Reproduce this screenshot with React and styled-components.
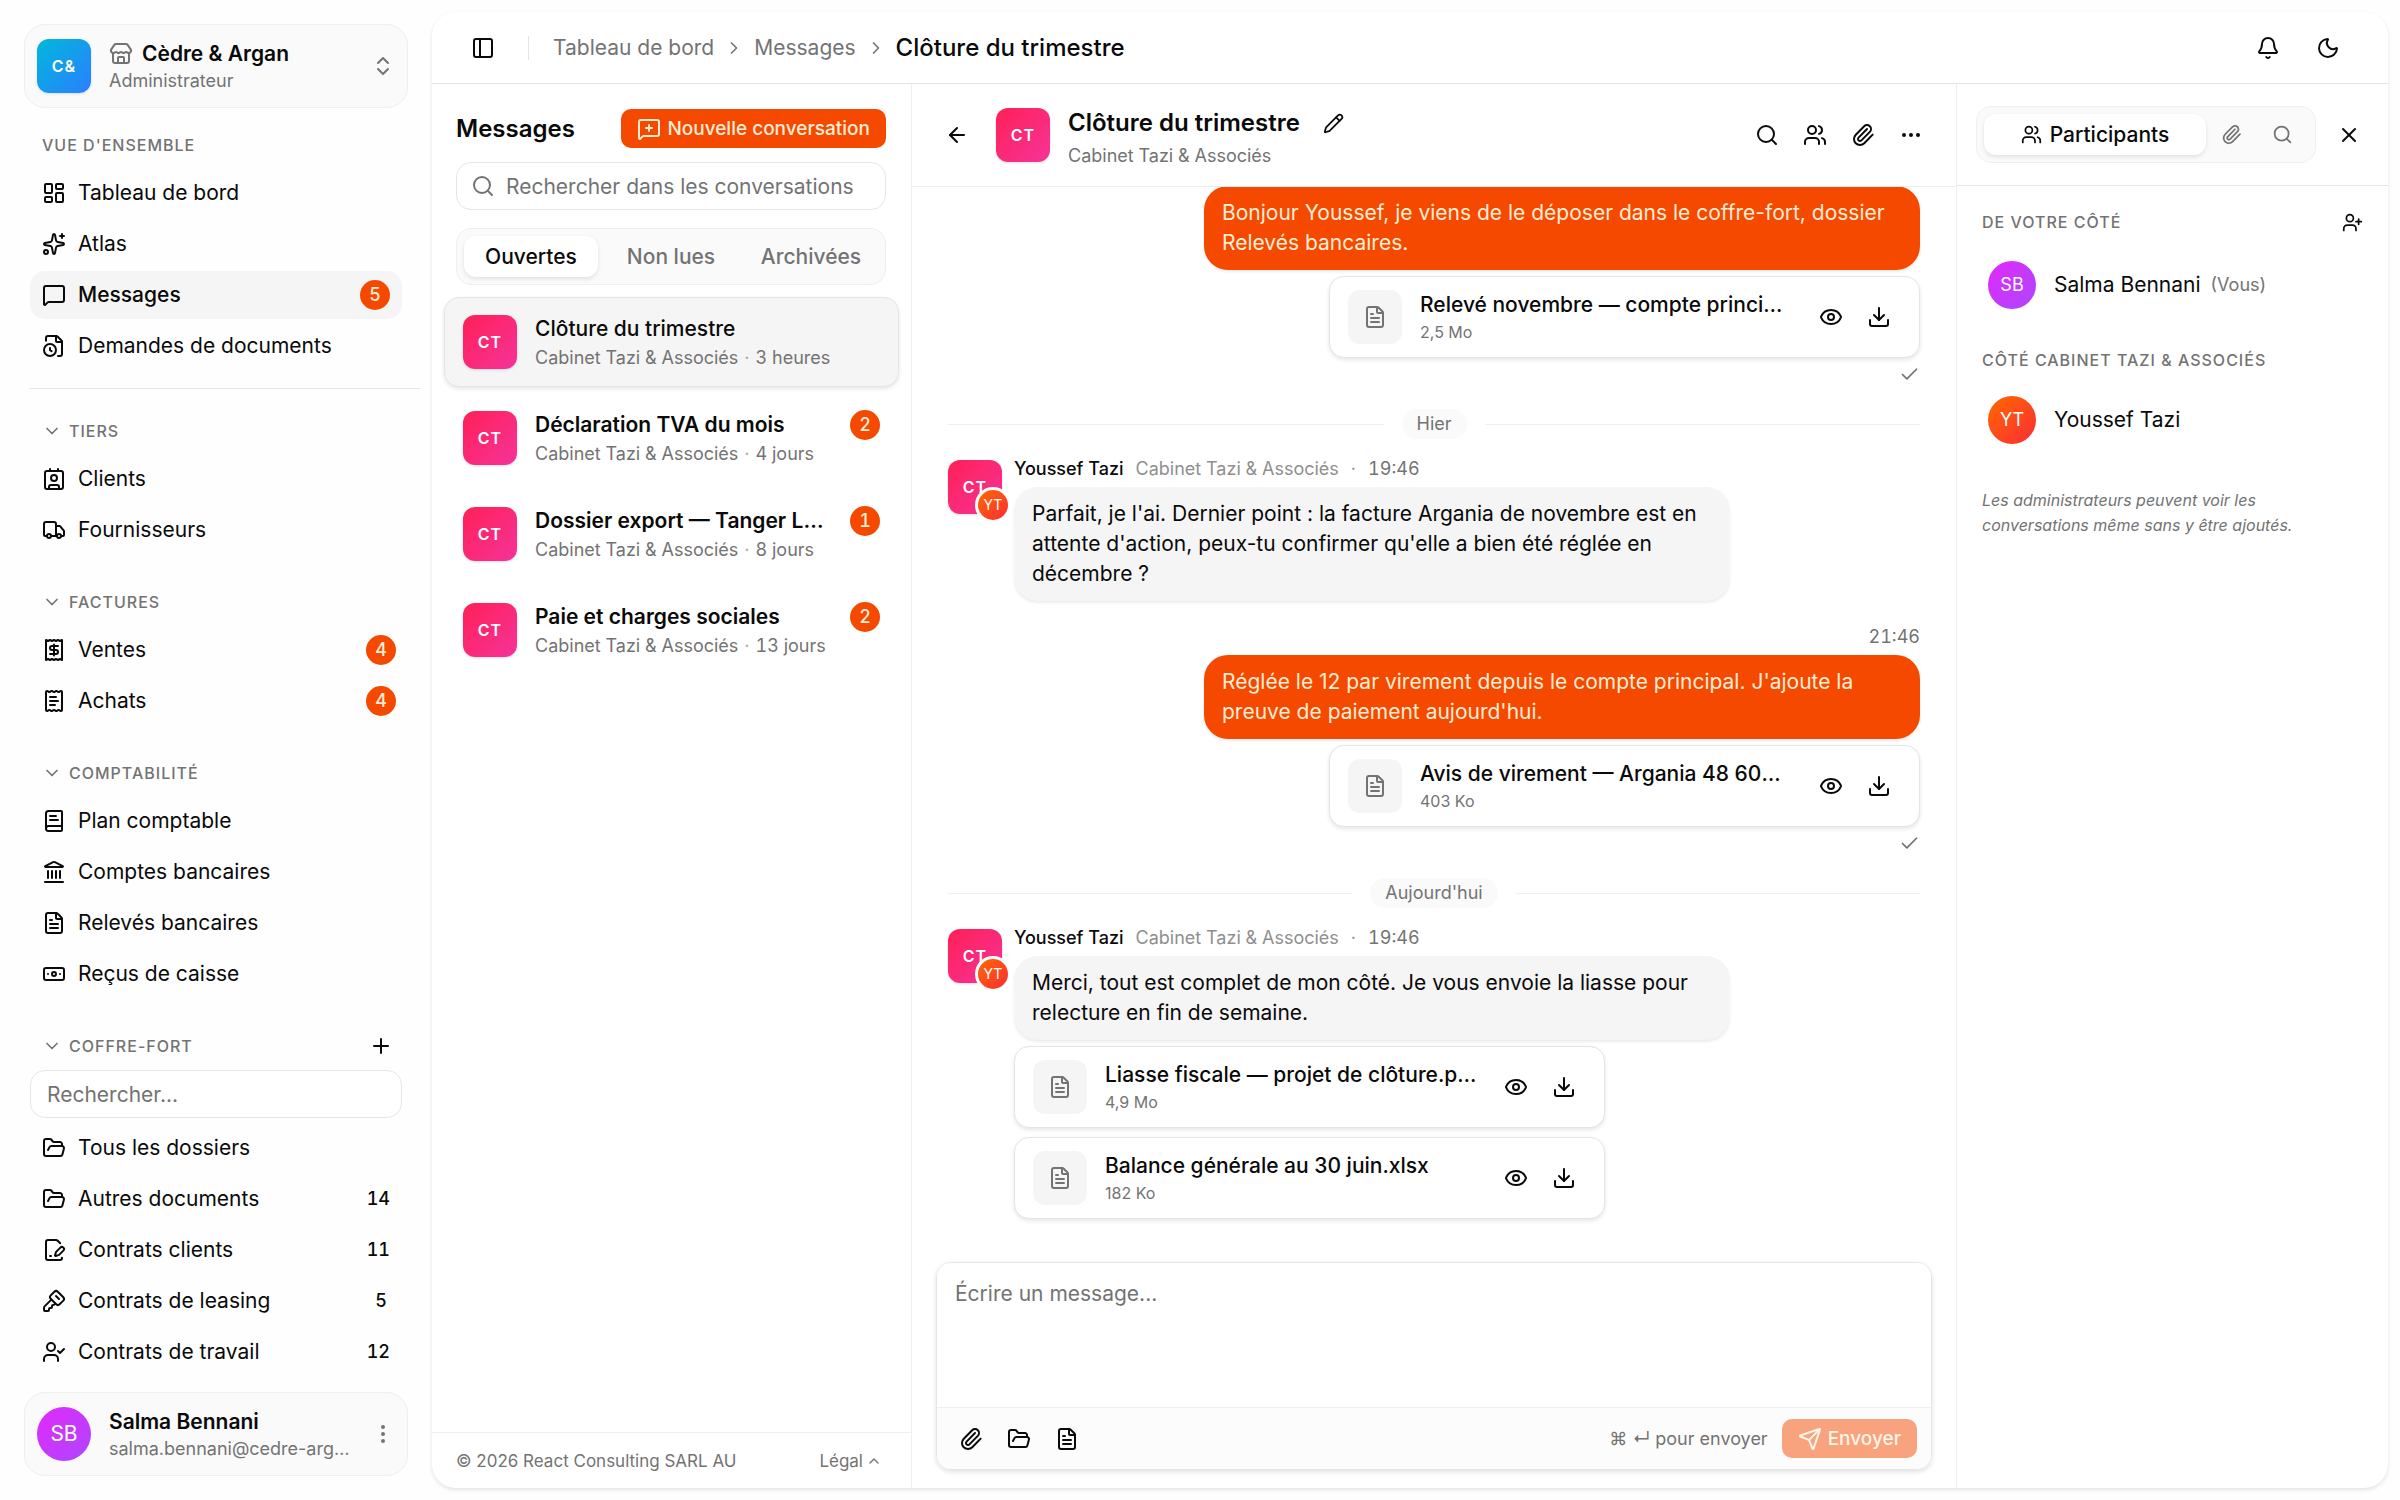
import { useState } from "react";
import styled, { createGlobalStyle, css } from "styled-components";
import {
  ArrowLeft,
  Banknote,
  Bell,
  BookText,
  Check,
  ChevronDown,
  ChevronRight,
  ChevronUp,
  ChevronsUpDown,
  Contact,
  Download,
  Ellipsis,
  EllipsisVertical,
  Eye,
  FileClock,
  FilePenLine,
  FileText,
  FolderOpen,
  KeySquare,
  Landmark,
  LayoutDashboard,
  MessageSquare,
  MessageSquarePlus,
  Moon,
  PanelLeft,
  Paperclip,
  Pencil,
  Plus,
  Receipt,
  ReceiptText,
  Search,
  Send,
  Sparkles,
  Store,
  Truck,
  UserCheck,
  UserPlus,
  Users,
  X,
} from "lucide-react";

const c = {
  text: "#0a0a0a",
  muted: "#737373",
  line: "#e5e5e5",
  softLine: "#efefef",
  soft: "#f5f5f5",
  faint: "#fafafa",
  orange: "#f54900",
  onOrange: "#ffedd5",
};

const gradients = {
  blue: "linear-gradient(135deg, #00b8db, #2b7fff)",
  pink: "linear-gradient(135deg, #ff2056, #f6339a)",
  purple: "linear-gradient(135deg, #e12afb, #ad46ff)",
  orange: "linear-gradient(135deg, #ff6900, #fb2c36)",
};

const GlobalStyle = createGlobalStyle`
  * { box-sizing: border-box; }
  body {
    margin: 0;
    background: #fefefe;
    color: ${c.text};
    font-family: Inter, "Liberation Sans", sans-serif;
    font-size: 21px;
    line-height: 30px;
  }
  button, input, textarea { font: inherit; color: inherit; }
  h1, h2, h3, p { margin: 0; }
`;

const truncate = css`
  overflow: hidden;
  white-space: nowrap;
  text-overflow: ellipsis;
`;

const Page = styled.div`
  display: flex;
  height: 100vh;
  min-height: 900px;
`;

/* ---------- shared ---------- */

const Avatar = styled.span`
  flex: none;
  display: inline-flex;
  align-items: center;
  justify-content: center;
  width: ${({ $size }) => $size || 54}px;
  height: ${({ $size }) => $size || 54}px;
  border-radius: ${({ $round }) => ($round ? "50%" : "12px")};
  background: ${({ $tone }) => gradients[$tone]};
  color: #fff;
  font-size: ${({ $font }) => $font || 16}px;
  font-weight: ${({ $round }) => ($round ? 400 : 600)};
  letter-spacing: ${({ $round }) => ($round ? "0" : "1px")};
  box-shadow: ${({ $round }) => ($round ? "none" : "0 1px 3px rgba(0, 0, 0, 0.12)")};
`;

const IconButton = styled.button`
  flex: none;
  display: inline-flex;
  align-items: center;
  justify-content: center;
  width: ${({ $size }) => $size || 48}px;
  height: ${({ $size }) => $size || 48}px;
  padding: 0;
  border: 0;
  border-radius: 12px;
  background: transparent;
  cursor: pointer;

  &:hover { background: ${c.soft}; }
`;

const Badge = styled.span`
  flex: none;
  min-width: 30px;
  height: 30px;
  padding: 0 6px;
  border-radius: 15px;
  font-size: 18px;
  font-weight: 500;
  font-variant-numeric: tabular-nums;
  text-align: center;
  background: ${({ $plain }) => ($plain ? "transparent" : c.orange)};
  color: ${({ $plain }) => ($plain ? c.text : c.onOrange)};
`;

const SolidButton = styled.button`
  display: inline-flex;
  align-items: center;
  gap: 6px;
  height: 39px;
  padding: 0 16px;
  border: 0;
  border-radius: 10px;
  background: ${c.orange};
  color: ${c.onOrange};
  font-size: 19px;
  font-weight: 500;
  white-space: nowrap;
  cursor: pointer;

  &:disabled { opacity: 0.5; cursor: default; }
`;

const Field = styled.input`
  width: 100%;
  height: 48px;
  padding: 0 16px 0 ${({ $icon }) => ($icon ? 49 : 16)}px;
  border: 1px solid ${c.line};
  border-radius: 15px;
  background: #fff;
  outline: none;

  &::placeholder { color: ${c.muted}; opacity: 1; }
  &:focus { border-color: ${c.orange}; }
`;

const TabBar = styled.div`
  display: flex;
  flex: ${({ $grow }) => ($grow ? 1 : "none")};
  gap: ${({ $grow }) => ($grow ? 0 : 6)}px;
  height: 57px;
  padding: 7px;
  border: 1px solid ${c.softLine};
  border-radius: 15px;
  background: ${c.faint};
`;

const Tab = styled.button`
  flex: ${({ $tight }) => ($tight ? "none" : "1 1 0")};
  display: inline-flex;
  align-items: center;
  justify-content: center;
  gap: 8px;
  padding: 0 15px;
  border: 0;
  border-radius: 12px;
  background: ${({ $on }) => ($on ? "#fff" : "transparent")};
  color: ${({ $on }) => ($on ? c.text : c.muted)};
  box-shadow: ${({ $on }) => ($on ? "0 2px 4px rgba(0, 0, 0, 0.1)" : "none")};
  font-weight: 500;
  cursor: pointer;
`;

/* ---------- sidebar ---------- */

const Sidebar = styled.aside`
  flex: none;
  display: flex;
  flex-direction: column;
  width: 432px;
  padding: 24px;
`;

const AccountCard = styled.button`
  flex: none;
  display: flex;
  align-items: center;
  gap: 18px;
  height: 84px;
  padding: 0 12px;
  border: 1px solid ${c.softLine};
  border-radius: 21px;
  background: ${c.faint};
  text-align: left;
  cursor: pointer;

  > svg { flex: none; color: ${c.muted}; }
`;

const AccountText = styled.span`
  flex: 1;
  min-width: 0;
  padding-top: 2px;
`;

const AccountName = styled.span`
  display: flex;
  align-items: center;
  gap: 9px;
  line-height: 27px;
  font-weight: 600;

  svg { color: ${c.muted}; }
`;

const AccountSub = styled.span`
  display: block;
  ${truncate}
  line-height: 27px;
  font-size: 18px;
  color: ${c.muted};
`;

const Nav = styled.nav`
  flex: 1;
  min-height: 0;
  padding: 13px 6px 0;
`;

const Group = styled.section`
  margin-bottom: 24px;
`;

const GroupHead = styled.div`
  display: flex;
  align-items: center;
  gap: 8px;
  height: 48px;
  padding: 0 0 0 12px;
  color: ${c.muted};
`;

const GroupTitle = styled.h3`
  flex: 1;
  font-size: 16px;
  font-weight: 500;
  letter-spacing: 1px;
  text-transform: uppercase;
`;

const GroupToggle = styled.button`
  flex: 1;
  display: flex;
  align-items: center;
  gap: 7px;
  padding: 0;
  border: 0;
  background: none;
  text-align: left;
  cursor: pointer;
`;

const AddButton = styled(IconButton)`
  margin-right: 6px;
  color: ${c.text};
`;

const Items = styled.div`
  display: grid;
  gap: 3px;
`;

const NavLink = styled.a`
  display: flex;
  align-items: center;
  gap: 12px;
  height: 48px;
  padding: 0 ${({ $on }) => ($on ? 12 : 6)}px 0 12px;
  border-radius: 15px;
  background: ${({ $on }) => ($on ? c.soft : "transparent")};
  font-weight: ${({ $on }) => ($on ? 500 : 400)};
  color: inherit;
  text-decoration: none;

  &:hover { background: ${c.soft}; }
`;

const NavLabel = styled.span`
  flex: 1;
  ${truncate}
`;

const Rule = styled.hr`
  height: 1px;
  margin: 18px -18px 18px 0;
  border: 0;
  background: ${c.line};
`;

const VaultSearch = styled.div`
  margin-bottom: 6px;
`;

/* ---------- main panel ---------- */

const Panel = styled.main`
  flex: 1;
  min-width: 0;
  display: flex;
  flex-direction: column;
  margin: 12px 12px 12px 0;
  border-radius: 24px;
  background: #fff;
  box-shadow: 0 2px 4px rgba(0, 0, 0, 0.11);
  overflow: hidden;
`;

const TopBar = styled.header`
  flex: none;
  display: flex;
  align-items: center;
  height: 72px;
  padding: 0 36px 0 27px;
  border-bottom: 1px solid ${c.line};
`;

const TopDivider = styled.span`
  width: 1px;
  height: 24px;
  margin: 0 24px 0 21px;
  background: ${c.line};
`;

const Crumbs = styled.nav`
  flex: 1;
  display: flex;
  align-items: center;
  gap: 10px;
  color: ${c.muted};

  a { color: inherit; text-decoration: none; }
`;

const CurrentCrumb = styled.h1`
  font-size: 24px;
  font-weight: 500;
  color: ${c.text};
`;

const TopActions = styled.div`
  display: flex;
  gap: 12px;
`;

const Columns = styled.div`
  flex: 1;
  min-height: 0;
  display: flex;
`;

const Inbox = styled.section`
  flex: none;
  display: flex;
  flex-direction: column;
  width: 480px;
  border-right: 1px solid ${c.softLine};
`;

const InboxHead = styled.div`
  display: grid;
  gap: 18px;
  padding: 25px 25px 12px 24px;
`;

const InboxTitle = styled.div`
  display: flex;
  align-items: center;
  justify-content: space-between;
  margin-bottom: -4px;

  h2 { font-size: 24px; font-weight: 600; }
`;

const SearchBox = styled.label`
  position: relative;
  display: block;

  svg {
    position: absolute;
    top: 12px;
    left: 15px;
    color: ${c.muted};
  }
`;

const Threads = styled.div`
  flex: 1;
  display: flex;
  flex-direction: column;
  gap: 6px;
  padding: 0 12px;
`;

const Thread = styled.button`
  display: flex;
  align-items: center;
  gap: 18px;
  height: 90px;
  padding: 0 18px;
  border: 1px solid ${({ $on }) => ($on ? c.line : "transparent")};
  border-radius: 15px;
  background: ${({ $on }) => ($on ? c.soft : "transparent")};
  box-shadow: ${({ $on }) => ($on ? "0 2px 4px rgba(0, 0, 0, 0.1)" : "none")};
  text-align: left;
  cursor: pointer;
`;

const ThreadBody = styled.span`
  flex: 1;
  min-width: 0;
`;

const ThreadTop = styled.span`
  display: flex;
  align-items: center;
  gap: 18px;
`;

const ThreadName = styled.span`
  flex: 1;
  ${truncate}
  font-weight: ${({ $unread }) => ($unread ? 600 : 500)};
`;

const Small = styled.span`
  display: block;
  ${truncate}
  font-size: 18px;
  line-height: 27px;
  font-variant-numeric: tabular-nums;
  color: ${c.muted};
`;

const Dot = styled.span`
  margin: 0 6px;
  color: #a3a3a3;
`;

const InboxFoot = styled.footer`
  display: flex;
  justify-content: space-between;
  align-items: center;
  height: 56px;
  padding: 0 29px 0 24px;
  border-top: 1px solid ${c.softLine};
  font-size: 17px;
  color: ${c.muted};
`;

const LegalButton = styled.button`
  display: inline-flex;
  align-items: center;
  gap: 3px;
  padding: 0;
  border: 0;
  background: none;
  cursor: pointer;
`;

/* ---------- conversation ---------- */

const Chat = styled.section`
  flex: 1;
  min-width: 0;
  display: flex;
  flex-direction: column;
`;

const ChatHead = styled.header`
  flex: none;
  display: flex;
  align-items: center;
  gap: 18px;
  height: 103px;
  padding: 0 21px 0 24px;
  border-bottom: 1px solid ${c.softLine};
`;

const ChatTitle = styled.div`
  flex: 1;
  min-width: 0;
`;

const ChatName = styled.div`
  display: flex;
  align-items: center;
  gap: 13px;

  h2 { font-size: 24px; font-weight: 600; }
`;

const ChatSub = styled(Small)`
  line-height: 24px;
`;

const Stream = styled.div`
  flex: 1;
  min-height: 0;
  display: flex;
  flex-direction: column;
  justify-content: flex-end;
  padding: 0 36px 25px;
  overflow: hidden;
`;

const DayRule = styled.div`
  display: flex;
  align-items: center;
  gap: 18px;
  margin: 24px 0 18px;

  &::before,
  &::after {
    content: "";
    flex: 1;
    height: 1px;
    background: ${c.softLine};
  }

  span {
    padding: 0 15px;
    border-radius: 15px;
    background: ${c.faint};
    font-size: 18px;
    color: ${c.muted};
  }
`;

const Sent = styled.article`
  display: flex;
  flex-direction: column;
  align-items: flex-end;
  gap: 6px;
`;

const Received = styled.article`
  display: flex;
  align-items: flex-start;
  gap: 12px;
`;

const ReceivedBody = styled.div`
  flex: 1;
  min-width: 0;
  display: flex;
  flex-direction: column;
  align-items: flex-start;
  gap: 6px;
`;

const Bubble = styled.p`
  max-width: 716px;
  padding: 12px 18px;
  border-radius: 24px;
  background: ${({ $own }) => ($own ? c.orange : c.soft)};
  color: ${({ $own }) => ($own ? c.onOrange : c.text)};
  box-shadow: 0 2px 3px rgba(0, 0, 0, 0.08);
`;

const AvatarStack = styled.div`
  position: relative;
  margin-top: 3px;
`;

const MiniAvatar = styled(Avatar)`
  position: absolute;
  right: -9px;
  bottom: -9px;
  border: 3px solid #fff;
`;

const Meta = styled.div`
  display: flex;
  gap: 12px;
  height: 24px;
  line-height: 24px;
  font-size: 18px;
  font-variant-numeric: tabular-nums;
  color: ${c.muted};

  b { font-weight: 500; color: ${c.text}; }
  i { font-style: normal; color: #8f8f8f; }
`;

const SentTime = styled.time`
  height: 24px;
  margin-top: 24px;
  line-height: 24px;
  font-size: 18px;
  font-variant-numeric: tabular-nums;
  color: ${c.muted};
`;

const Receipts = styled.div`
  display: flex;
  align-items: center;
  height: 21px;
  color: ${c.muted};
`;

const Files = styled.div`
  display: grid;
  gap: 9px;
`;

const FileCard = styled.div`
  display: flex;
  align-items: center;
  width: 591px;
  height: 82px;
  padding: 0 16px 0 18px;
  border: 1px solid ${c.line};
  border-radius: 15px;
  background: #fff;
  box-shadow: 0 2px 4px rgba(0, 0, 0, 0.1);
`;

const FileIcon = styled.span`
  flex: none;
  display: flex;
  align-items: center;
  justify-content: center;
  width: 54px;
  height: 54px;
  margin-right: 18px;
  border-radius: 12px;
  background: ${c.soft};
  color: ${c.muted};
`;

const FileInfo = styled.div`
  flex: 1;
  min-width: 0;
  margin-right: 14px;
`;

const FileName = styled.div`
  ${truncate}
  font-weight: 500;
`;

const FileSize = styled.div`
  font-size: 16px;
  line-height: 24px;
  color: ${c.muted};
`;

const Composer = styled.form`
  flex: none;
  display: flex;
  flex-direction: column;
  margin: 18px 24px;
  border: 1px solid ${c.line};
  border-radius: 15px;
  box-shadow: 0 2px 5px rgba(0, 0, 0, 0.12);
  overflow: hidden;
`;

const MessageInput = styled.textarea`
  display: block;
  height: 144px;
  padding: 16px 18px;
  border: 0;
  outline: none;
  resize: none;
  background: #fff;

  &::placeholder { color: ${c.muted}; opacity: 1; }
`;

const ComposerBar = styled.div`
  display: flex;
  align-items: center;
  height: 62px;
  padding: 0 14px 0 10px;
  border-top: 1px solid ${c.softLine};
  background: #fcfcfc;
`;

const Shortcut = styled.span`
  margin-left: auto;
  margin-right: 14px;
  font-size: 18px;
  color: ${c.muted};
`;

/* ---------- participants ---------- */

const Details = styled.aside`
  flex: none;
  width: 432px;
  border-left: 1px solid ${c.softLine};
`;

const DetailsHead = styled.div`
  display: flex;
  align-items: center;
  gap: 9px;
  height: 102px;
  padding: 0 15px 0 19px;
  border-bottom: 1px solid ${c.line};
`;

const DetailsBody = styled.div`
  display: grid;
  gap: 24px;
  padding: 12px 12px 24px 25px;
`;

const PeopleHead = styled.div`
  display: flex;
  align-items: center;
  min-height: 42px;
  margin-bottom: 9px;
  color: ${c.muted};

  button { color: ${c.text}; }
`;

const Person = styled.div`
  display: flex;
  align-items: center;
  gap: 18px;
  height: 60px;
  padding: 0 6px;
`;

const PersonName = styled.span`
  display: flex;
  gap: 10px;

  small { font-size: 18px; color: ${c.muted}; }
`;

const Note = styled.p`
  padding-top: 14px;
  padding-right: 24px;
  font-size: 16px;
  line-height: 25px;
  font-style: italic;
  color: ${c.muted};
`;

const overview = [
  { label: "Tableau de bord", icon: LayoutDashboard },
  { label: "Atlas", icon: Sparkles },
  { label: "Messages", icon: MessageSquare, badge: 5, on: true },
  { label: "Demandes de documents", icon: FileClock },
];

const groups = [
  {
    title: "Tiers",
    items: [
      { label: "Clients", icon: Contact },
      { label: "Fournisseurs", icon: Truck },
    ],
  },
  {
    title: "Factures",
    items: [
      { label: "Ventes", icon: Receipt, badge: 4 },
      { label: "Achats", icon: ReceiptText, badge: 4 },
    ],
  },
  {
    title: "Comptabilité",
    items: [
      { label: "Plan comptable", icon: BookText },
      { label: "Comptes bancaires", icon: Landmark },
      { label: "Relevés bancaires", icon: FileText },
      { label: "Reçus de caisse", icon: Banknote },
    ],
  },
  {
    title: "Coffre-fort",
    vault: true,
    items: [
      { label: "Tous les dossiers", icon: FolderOpen },
      { label: "Autres documents", icon: FolderOpen, count: 14 },
      { label: "Contrats clients", icon: FilePenLine, count: 11 },
      { label: "Contrats de leasing", icon: KeySquare, count: 5 },
      { label: "Contrats de travail", icon: UserCheck, count: 12 },
    ],
  },
];

const threads = [
  { name: "Clôture du trimestre", age: "3 heures" },
  { name: "Déclaration TVA du mois", age: "4 jours", unread: 2 },
  { name: "Dossier export — Tanger Logistique", age: "8 jours", unread: 1 },
  { name: "Paie et charges sociales", age: "13 jours", unread: 2 },
];

function NavItems({ items }) {
  return (
    <Items>
      {items.map(({ label, icon: Icon, badge, count, on }) => (
        <NavLink key={label} href="#" $on={on} aria-current={on ? "page" : undefined}>
          <Icon size={24} />
          <NavLabel>{label}</NavLabel>
          {badge && <Badge>{badge}</Badge>}
          {count && <Badge $plain>{count}</Badge>}
        </NavLink>
      ))}
    </Items>
  );
}

function SideMenu() {
  return (
    <Sidebar>
      <AccountCard type="button">
        <Avatar $tone="blue">C&amp;</Avatar>
        <AccountText>
          <AccountName>
            <Store size={24} />
            Cèdre &amp; Argan
          </AccountName>
          <AccountSub>Administrateur</AccountSub>
        </AccountText>
        <ChevronsUpDown size={24} />
      </AccountCard>

      <Nav aria-label="Menu principal">
        <GroupHead>
          <GroupTitle>Vue d'ensemble</GroupTitle>
        </GroupHead>
        <NavItems items={overview} />
        <Rule />
        {groups.map((group) => (
          <Group key={group.title}>
            <GroupHead>
              <GroupToggle type="button">
                <ChevronDown size={20} />
                <GroupTitle>{group.title}</GroupTitle>
              </GroupToggle>
              {group.vault && (
                <AddButton type="button" $size={30} aria-label="Ajouter un dossier">
                  <Plus size={24} />
                </AddButton>
              )}
            </GroupHead>
            {group.vault && (
              <VaultSearch>
                <Field type="text" placeholder="Rechercher..." aria-label="Rechercher un dossier" />
              </VaultSearch>
            )}
            <NavItems items={group.items} />
          </Group>
        ))}
      </Nav>

      <AccountCard type="button">
        <Avatar $tone="purple" $round $font={21}>SB</Avatar>
        <AccountText>
          <AccountName>Salma Bennani</AccountName>
          <AccountSub>salma.bennani@cedre-argan.ma</AccountSub>
        </AccountText>
        <EllipsisVertical size={24} />
      </AccountCard>
    </Sidebar>
  );
}

function ThreadList() {
  const [tab, setTab] = useState("Ouvertes");
  const [active, setActive] = useState(0);

  return (
    <Inbox>
      <InboxHead>
        <InboxTitle>
          <h2>Messages</h2>
          <SolidButton type="button">
            <MessageSquarePlus size={24} />
            Nouvelle conversation
          </SolidButton>
        </InboxTitle>
        <SearchBox>
          <Search size={24} />
          <Field $icon type="text" placeholder="Rechercher dans les conversations" aria-label="Rechercher dans les conversations" />
        </SearchBox>
        <TabBar>
          {["Ouvertes", "Non lues", "Archivées"].map((name) => (
            <Tab key={name} type="button" $on={tab === name} onClick={() => setTab(name)}>
              {name}
            </Tab>
          ))}
        </TabBar>
      </InboxHead>

      <Threads>
        {threads.map((t, i) => (
          <Thread key={t.name} type="button" $on={i === active} onClick={() => setActive(i)}>
            <Avatar $tone="pink">CT</Avatar>
            <ThreadBody>
              <ThreadTop>
                <ThreadName $unread={t.unread}>{t.name}</ThreadName>
                {t.unread && <Badge>{t.unread}</Badge>}
              </ThreadTop>
              <Small>
                Cabinet Tazi &amp; Associés<Dot>·</Dot>{t.age}
              </Small>
            </ThreadBody>
          </Thread>
        ))}
      </Threads>

      <InboxFoot>
        <span>© 2026 React Consulting SARL AU</span>
        <LegalButton type="button">
          Légal <ChevronUp size={16} />
        </LegalButton>
      </InboxFoot>
    </Inbox>
  );
}

function Attachment({ name, size }) {
  return (
    <FileCard>
      <FileIcon>
        <FileText size={24} />
      </FileIcon>
      <FileInfo>
        <FileName>{name}</FileName>
        <FileSize>{size}</FileSize>
      </FileInfo>
      <IconButton type="button" aria-label="Aperçu">
        <Eye size={24} />
      </IconButton>
      <IconButton type="button" aria-label="Télécharger">
        <Download size={24} />
      </IconButton>
    </FileCard>
  );
}

function SentMessage({ time, text, file }) {
  return (
    <Sent>
      {time && <SentTime>{time}</SentTime>}
      <Bubble $own>{text}</Bubble>
      <Attachment {...file} />
      <Receipts>
        <Check size={21} />
      </Receipts>
    </Sent>
  );
}

function ReceivedMessage({ time, text, files = [] }) {
  return (
    <Received>
      <AvatarStack>
        <Avatar $tone="pink">CT</Avatar>
        <MiniAvatar $tone="orange" $round $size={36} $font={14}>YT</MiniAvatar>
      </AvatarStack>
      <ReceivedBody>
        <Meta>
          <b>Youssef Tazi</b>
          <i>Cabinet Tazi &amp; Associés</i>
          <i>·</i>
          <time>{time}</time>
        </Meta>
        <Bubble>{text}</Bubble>
        {files.length > 0 && (
          <Files>
            {files.map((f) => (
              <Attachment key={f.name} {...f} />
            ))}
          </Files>
        )}
      </ReceivedBody>
    </Received>
  );
}

function Conversation() {
  const [draft, setDraft] = useState("");

  return (
    <Chat>
      <ChatHead>
        <IconButton type="button" $size={42} aria-label="Retour">
          <ArrowLeft size={24} />
        </IconButton>
        <Avatar $tone="pink">CT</Avatar>
        <ChatTitle>
          <ChatName>
            <h2>Clôture du trimestre</h2>
            <IconButton type="button" $size={42} aria-label="Renommer">
              <Pencil size={21} />
            </IconButton>
          </ChatName>
          <ChatSub>Cabinet Tazi &amp; Associés</ChatSub>
        </ChatTitle>
        <div>
          <IconButton type="button" aria-label="Rechercher"><Search size={24} /></IconButton>
          <IconButton type="button" aria-label="Participants"><Users size={24} /></IconButton>
          <IconButton type="button" aria-label="Pièces jointes"><Paperclip size={24} /></IconButton>
          <IconButton type="button" aria-label="Plus d'options"><Ellipsis size={24} /></IconButton>
        </div>
      </ChatHead>

      <Stream>
        <SentMessage
          text="Bonjour Youssef, je viens de le déposer dans le coffre-fort, dossier Relevés bancaires."
          file={{ name: "Relevé novembre — compte principal.pdf", size: "2,5 Mo" }}
        />
        <DayRule><span>Hier</span></DayRule>
        <ReceivedMessage
          time="19:46"
          text="Parfait, je l'ai. Dernier point : la facture Argania de novembre est en attente d'action, peux-tu confirmer qu'elle a bien été réglée en décembre ?"
        />
        <SentMessage
          time="21:46"
          text="Réglée le 12 par virement depuis le compte principal. J'ajoute la preuve de paiement aujourd'hui."
          file={{ name: "Avis de virement — Argania 48 600 MAD.pdf", size: "403 Ko" }}
        />
        <DayRule><span>Aujourd'hui</span></DayRule>
        <ReceivedMessage
          time="19:46"
          text="Merci, tout est complet de mon côté. Je vous envoie la liasse pour relecture en fin de semaine."
          files={[
            { name: "Liasse fiscale — projet de clôture.pdf", size: "4,9 Mo" },
            { name: "Balance générale au 30 juin.xlsx", size: "182 Ko" },
          ]}
        />
      </Stream>

      <Composer onSubmit={(e) => e.preventDefault()}>
        <MessageInput
          placeholder="Écrire un message..."
          aria-label="Écrire un message"
          value={draft}
          onChange={(e) => setDraft(e.target.value)}
        />
        <ComposerBar>
          <IconButton type="button" aria-label="Joindre un fichier"><Paperclip size={24} /></IconButton>
          <IconButton type="button" aria-label="Choisir dans le coffre-fort"><FolderOpen size={24} /></IconButton>
          <IconButton type="button" aria-label="Joindre une facture"><FileText size={24} /></IconButton>
          <Shortcut>⌘ ↵ pour envoyer</Shortcut>
          <SolidButton type="submit" disabled={!draft.trim()}>
            <Send size={24} />
            Envoyer
          </SolidButton>
        </ComposerBar>
      </Composer>
    </Chat>
  );
}

function Participants() {
  return (
    <Details>
      <DetailsHead>
        <TabBar $grow>
          <Tab type="button" $on><Users size={21} />Participants</Tab>
          <Tab type="button" $tight aria-label="Pièces jointes"><Paperclip size={21} /></Tab>
          <Tab type="button" $tight aria-label="Rechercher"><Search size={21} /></Tab>
        </TabBar>
        <IconButton type="button" aria-label="Fermer"><X size={24} /></IconButton>
      </DetailsHead>
      <DetailsBody>
        <section>
          <PeopleHead>
            <GroupTitle>De votre côté</GroupTitle>
            <IconButton type="button" aria-label="Ajouter un participant"><UserPlus size={21} /></IconButton>
          </PeopleHead>
          <Person>
            <Avatar $tone="purple" $round $size={48} $font={18}>SB</Avatar>
            <PersonName>Salma Bennani <small>(Vous)</small></PersonName>
          </Person>
        </section>
        <section>
          <PeopleHead>
            <GroupTitle>Côté Cabinet Tazi &amp; Associés</GroupTitle>
          </PeopleHead>
          <Person>
            <Avatar $tone="orange" $round $size={48} $font={18}>YT</Avatar>
            <PersonName>Youssef Tazi</PersonName>
          </Person>
        </section>
        <Note>Les administrateurs peuvent voir les conversations même sans y être ajoutés.</Note>
      </DetailsBody>
    </Details>
  );
}

export default function App() {
  return (
    <Page>
      <GlobalStyle />
      <SideMenu />
      <Panel>
        <TopBar>
          <IconButton type="button" aria-label="Réduire le menu"><PanelLeft size={24} /></IconButton>
          <TopDivider />
          <Crumbs aria-label="Fil d'Ariane">
            <a href="#">Tableau de bord</a>
            <ChevronRight size={20} />
            <a href="#">Messages</a>
            <ChevronRight size={20} />
            <CurrentCrumb>Clôture du trimestre</CurrentCrumb>
          </Crumbs>
          <TopActions>
            <IconButton type="button" aria-label="Notifications"><Bell size={24} /></IconButton>
            <IconButton type="button" aria-label="Thème sombre"><Moon size={24} /></IconButton>
          </TopActions>
        </TopBar>
        <Columns>
          <ThreadList />
          <Conversation />
          <Participants />
        </Columns>
      </Panel>
    </Page>
  );
}
